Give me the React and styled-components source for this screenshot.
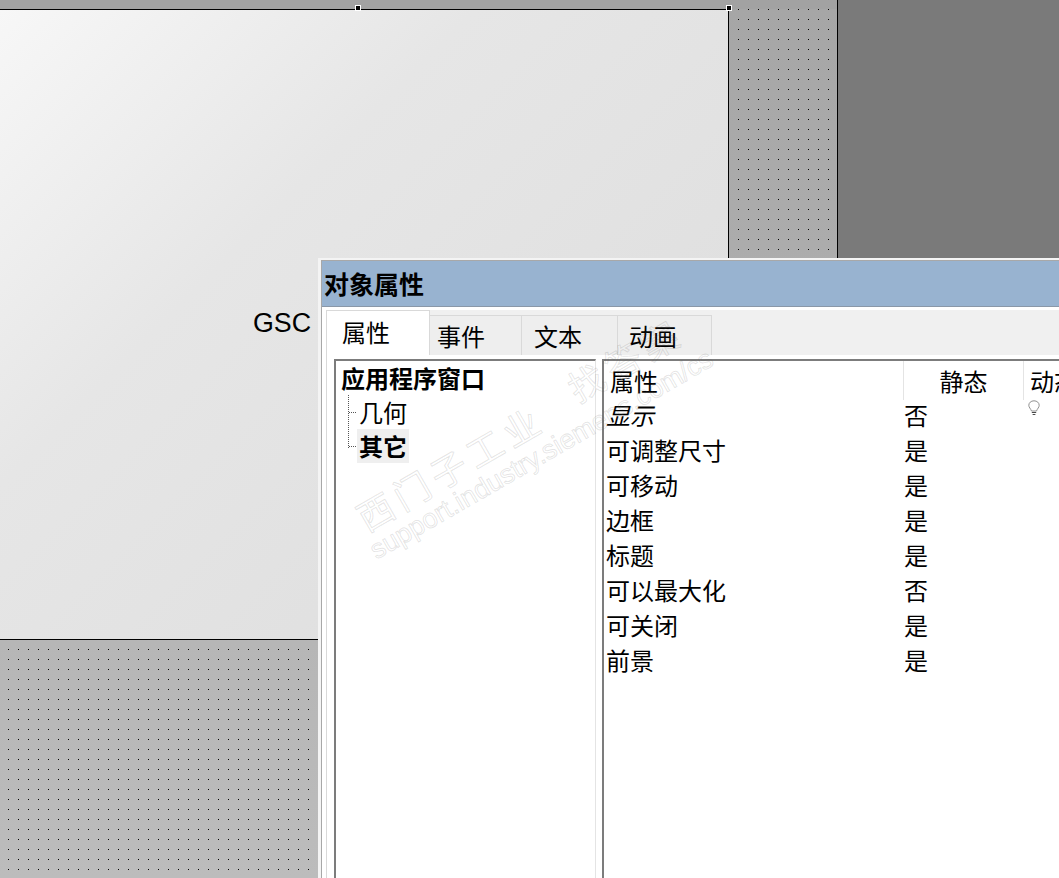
import React from "react";
import styled, { createGlobalStyle } from "styled-components";

const GlobalStyle = createGlobalStyle`
  html, body {
    margin: 0;
    padding: 0;
    overflow: hidden;
  }
  body {
    font-family: "Noto Sans CJK SC", "Liberation Sans", sans-serif;
    color: #000;
  }
`;

const rows = [
  { name: "显示", value: "否", italic: true },
  { name: "可调整尺寸", value: "是" },
  { name: "可移动", value: "是" },
  { name: "边框", value: "是" },
  { name: "标题", value: "是" },
  { name: "可以最大化", value: "否" },
  { name: "可关闭", value: "是" },
  { name: "前景", value: "是" },
];

const tabs = [
  { label: "属性", width: 104, pad: 15 },
  { label: "事件", width: 92, pad: 7 },
  { label: "文本", width: 96, pad: 12 },
  { label: "动画", width: 94, pad: 11 },
];

function Bulb() {
  return (
    <svg width="14" height="16" viewBox="0 0 14 16" fill="none">
      <path
        d="M7 .8C3.900.8 1.800 2.900 1.800 5.300c0 2.100 1.900 3.400 2.700 5.700h5c.8-2.300 2.700-3.600 2.700-5.700C12.200 2.900 10.100.8 7 .8z"
        fill="#fff"
        stroke="#8f8f8f"
      />
      <path d="M4.800 12.500h4.400M5.600 14.500h2.800" stroke="#4a4a4a" />
    </svg>
  );
}

export default function App() {
  return (
    <>
      <GlobalStyle />
      <Workspace>
        <Canvas>
          <TopStrip />
          <PageArea>
            <AppWindow>
              <Handle $corner="left" />
              <Handle $corner="right" />
              <WindowLabel>GSC</WindowLabel>
            </AppWindow>
          </PageArea>
        </Canvas>
        <Dialog>
          <TitleBar>对象属性</TitleBar>
          <DialogBody>
            <TabRow>
              {tabs.map((t, i) => (
                <Tab key={t.label} $active={i === 0} $width={t.width} $pad={t.pad}>
                  {t.label}
                </Tab>
              ))}
            </TabRow>
            <Panes>
              <TreePane>
                <TreeRoot>应用程序窗口</TreeRoot>
                <TreeBranch>
                  <TreeItem>几何</TreeItem>
                  <TreeItem $selected>其它</TreeItem>
                </TreeBranch>
              </TreePane>
              <TablePane>
                <HeaderRow>
                  <NameHead>属性</NameHead>
                  <StaticHead>静态</StaticHead>
                  <DynamicHead>动态</DynamicHead>
                </HeaderRow>
                {rows.map((r, i) => (
                  <Row key={r.name}>
                    <NameCell $italic={r.italic}>{r.name}</NameCell>
                    <ValueCell>{r.value}</ValueCell>
                    {i === 0 && (
                      <BulbCell>
                        <Bulb />
                      </BulbCell>
                    )}
                  </Row>
                ))}
              </TablePane>
            </Panes>
          </DialogBody>
          <Watermark>
            <MarkLine $left={38} $top={239}>西门子工业</MarkLine>
            <MarkLine $left={249} $top={110}>找答案</MarkLine>
            <MarkUrl>support.industry.siemens.com/cs</MarkUrl>
          </Watermark>
        </Dialog>
      </Workspace>
    </>
  );
}

const Workspace = styled.div`
  position: relative;
  display: flex;
  width: 1059px;
  height: 878px;
  overflow: hidden;
  background: #7a7a7a;
`;

const Canvas = styled.div`
  display: flex;
  flex-direction: column;
  width: 837px;
  height: 878px;
  border-right: 1px solid #000;
`;

const TopStrip = styled.div`
  height: 9px;
  flex: none;
  background: #a2a2a2;
`;

const PageArea = styled.div`
  flex: 1;
  background-color: #a9a9a9;
  background-image:
    conic-gradient(from 270deg at 1px 1px, #000 90deg, transparent 0),
    linear-gradient(180deg, #a6a6a6, #bcbcbc);
  background-size: 10px 10px, 100% 100%;
  background-position: 8px 0, 0 0;
`;

const AppWindow = styled.div`
  position: relative;
  width: 729px;
  height: 631px;
  box-sizing: border-box;
  border-top: 1px solid #000;
  border-right: 1px solid #000;
  border-bottom: 1px solid #000;
  background: linear-gradient(135deg, #f7f7f7 0%, #e6e6e6 35%, #dcdcdc 100%);
`;

const Handle = styled.span`
  position: absolute;
  top: -5px;
  left: ${(p) => (p.$corner === "left" ? "355px" : "726px")};
  width: 4px;
  height: 4px;
  background: #000;
  border: 1px solid #fff;
`;

const WindowLabel = styled.span`
  position: absolute;
  top: 296px;
  left: 253px;
  font-family: "Liberation Sans", sans-serif;
  font-size: 26.800px;
  line-height: 34px;
`;

const Dialog = styled.div`
  position: absolute;
  top: 258px;
  left: 318px;
  width: 760px;
  height: 640px;
  box-sizing: border-box;
  display: flex;
  flex-direction: column;
  background: #f4f4f4;
  border-top: 2px solid #f4f4f4;
  border-left: 3px solid #f4f4f4;
  padding: 1px 0 0 1px;
  box-shadow: inset 1px 1px 0 #a8a8a8;
`;

const TitleBar = styled.div`
  flex: none;
  height: 45px;
  padding-left: 2px;
  background: #98b3d0;
  border-bottom: 1px solid #8a98a8;
  font-size: 25px;
  font-weight: 700;
  line-height: 44px;
`;

const DialogBody = styled.div`
  flex: 1;
  display: flex;
  flex-direction: column;
  padding: 3px 0 0 4px;
  background: #fff;
`;

const TabRow = styled.div`
  display: flex;
  align-items: flex-end;
  height: 45px;
  flex: none;
  background: #f0f0f0;
`;

const Tab = styled.div`
  box-sizing: border-box;
  width: ${(p) => p.$width}px;
  height: ${(p) => (p.$active ? "45px" : "40px")};
  padding-left: ${(p) => p.$pad}px;
  background: ${(p) => (p.$active ? "#fff" : "#eeeeee")};
  border: 1px solid #d9d9d9;
  border-left-width: ${(p) => (p.$active ? "1px" : "0")};
  border-bottom: none;
  font-size: 24px;
  line-height: ${(p) => (p.$active ? "41px" : "39px")};
`;

const Panes = styled.div`
  flex: 1;
  display: flex;
  padding: 4px 0 0 7px;
  border-left: 1px solid #d9d9d9;
`;

const TreePane = styled.div`
  box-sizing: border-box;
  width: 265px;
  background: #fff;
  border-top: 2px solid #7c7c7c;
  border-left: 2px solid #7c7c7c;
  border-right: 1px solid #e4e4e4;
  padding: 0 0 0 5px;
`;

const TreeRoot = styled.div`
  font-size: 24px;
  font-weight: 700;
  line-height: 34px;
`;

const TreeBranch = styled.div`
  margin-left: 7px;
  border-left: 1px dotted #555;
  height: 53px;
  padding-left: 8px;
`;

const TreeItem = styled.div`
  position: relative;
  width: fit-content;
  padding: 0 2px;
  font-size: 24px;
  line-height: 34px;
  font-weight: ${(p) => (p.$selected ? 700 : 400)};
  background: ${(p) => (p.$selected ? "#efefef" : "transparent")};

  &::before {
    content: "";
    position: absolute;
    left: -8px;
    top: 17px;
    width: 7px;
    border-top: 1px dotted #555;
  }
`;

const TablePane = styled.div`
  box-sizing: border-box;
  margin-left: 6px;
  flex: 1;
  background: #fff;
  border-top: 2px solid #7c7c7c;
  border-left: 2px solid #7c7c7c;
`;

const HeaderRow = styled.div`
  display: grid;
  grid-template-columns: 300px 120px 1fr;
  height: 39px;
  font-size: 24px;
  line-height: 39px;
`;

const NameHead = styled.div`
  padding-left: 6px;
  border-right: 1px solid #e4e4e4;
`;

const StaticHead = styled.div`
  text-align: center;
  border-right: 1px solid #e4e4e4;
`;

const DynamicHead = styled.div`
  padding-left: 6px;
  white-space: nowrap;
`;

const Row = styled.div`
  position: relative;
  display: grid;
  grid-template-columns: 300px 1fr;
  height: 35px;
  font-size: 24px;
  line-height: 30px;
`;

const NameCell = styled.div`
  padding-left: 2px;
  font-style: ${(p) => (p.$italic ? "italic" : "normal")};
`;

const ValueCell = styled.div``;

const BulbCell = styled.div`
  position: absolute;
  left: 423px;
  top: 0;
  line-height: 0;
`;

const Watermark = styled.div`
  position: absolute;
  left: 0;
  top: 0;
  width: 100%;
  height: 100%;
  pointer-events: none;
  color: transparent;
`;

const MarkLine = styled.span`
  position: absolute;
  left: ${(p) => p.$left}px;
  top: ${(p) => p.$top}px;
  font-size: 36px;
  line-height: 40px;
  letter-spacing: 6px;
  white-space: nowrap;
  transform: rotate(-30deg);
  transform-origin: left center;
  -webkit-text-stroke: 1px rgba(90, 90, 90, 0.16);
`;

const MarkUrl = styled.span`
  position: absolute;
  left: 51px;
  top: 277px;
  font-family: "Liberation Sans", sans-serif;
  font-size: 27px;
  line-height: 30px;
  white-space: nowrap;
  transform: rotate(-30deg);
  transform-origin: left center;
  -webkit-text-stroke: 1px rgba(90, 90, 90, 0.16);
`;
